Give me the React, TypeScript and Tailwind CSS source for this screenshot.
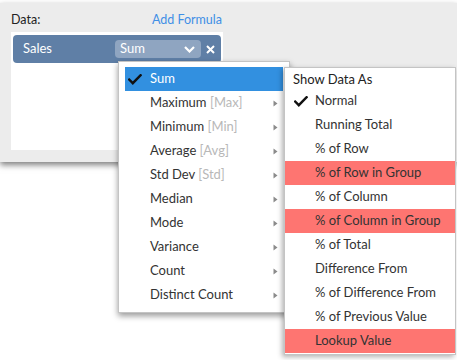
import React from "react";

const Check = ({ className = "" }: { className?: string }) => (
  <svg width="14" height="11" viewBox="0 0 14 11" className={className}>
    <path d="M1.2 5.6 L4.8 9.2 L12.6 1.2" fill="none" stroke="#111" strokeWidth="2.4" strokeLinecap="square" />
  </svg>
);

const Arrow = () => (
  <svg width="5" height="7" viewBox="0 0 5 7" className="shrink-0">
    <path d="M0.5 0.5 L4.5 3.5 L0.5 6.5 Z" fill="#8a8a8a" />
  </svg>
);

const leftItems: [string, string][] = [
  ["Maximum", "[Max]"],
  ["Minimum", "[Min]"],
  ["Average", "[Avg]"],
  ["Std Dev", "[Std]"],
  ["Median", ""],
  ["Mode", ""],
  ["Variance", ""],
  ["Count", ""],
  ["Distinct Count", ""],
];

const rightItems: [string, boolean][] = [
  ["Normal", false],
  ["Running Total", false],
  ["% of Row", false],
  ["% of Row in Group", true],
  ["% of Column", false],
  ["% of Column in Group", true],
  ["% of Total", false],
  ["Difference From", false],
  ["% of Difference From", false],
  ["% of Previous Value", false],
  ["Lookup Value", true],
];

export default function App() {
  return (
    <div
      className="relative w-[457px] h-[360px] bg-white overflow-hidden text-[#333]"
      style={{ fontFamily: "Lato, 'Open Sans', sans-serif" }}
    >
      <div className="pt-[3px]">
        <div className="h-[159px] bg-[#ececec] shadow-[0_3px_6px_rgba(0,0,0,0.5)] pt-[8px]">
          <div className="ml-[11px] w-[212px] flex justify-between items-center h-[18px] text-[12.5px]">
            <span className="text-[#222]">Data:</span>
            <span className="text-[#3f8fe6] mr-[1px]">Add Formula</span>
          </div>
          <div className="ml-[11px] mt-[3px] w-[212px] h-[118px] bg-white pt-[3px] px-[2px]">
            <div className="h-[28px] rounded-[4px] bg-[#5f7fa6] flex items-center pl-[10px] pr-[6px]">
              <span className="text-white text-[13px] flex-1">Sales</span>
              <div className="w-[86px] h-[18px] rounded-[4px] bg-[#8fa5c1] flex items-center pl-[5px] pr-[6px]">
                <span className="text-white text-[13px] flex-1">Sum</span>
                <svg width="11" height="7" viewBox="0 0 11 7">
                  <path d="M1 1 L5.5 5.5 L10 1" fill="none" stroke="white" strokeWidth="2.2" />
                </svg>
              </div>
              <svg width="9" height="9" viewBox="0 0 9 9" className="ml-[5px]">
                <path d="M1 1 L8 8 M8 1 L1 8" stroke="white" strokeWidth="2" />
              </svg>
            </div>
          </div>
        </div>
      </div>

      {/* Left aggregation menu */}
      <div className="absolute left-[118px] top-[61px] w-[172px] h-[252px] bg-white border border-[#c4c4c4] shadow-[0_3px_6px_rgba(0,0,0,0.4)] pt-[5px] px-[6px] text-[13px]">
        <div className="h-[24px] bg-[#3290e0] flex items-center pl-[3px]">
          <Check className="shrink-0" />
          <span className="ml-[8px] text-white">Sum</span>
        </div>
        {leftItems.map(([a, b]) => (
          <div key={a} className="h-[24px] flex items-center pl-[25px] pr-[5px]">
            <span className="flex-1">
              {a}
              {b && <span className="text-[#b8b8b8]"> {b}</span>}
            </span>
            <Arrow />
          </div>
        ))}
      </div>

      {/* Right show data as menu */}
      <div className="absolute left-[284px] top-[67px] w-[172px] h-[288px] bg-white border border-[#c4c4c4] shadow-[-2px_2px_5px_rgba(0,0,0,0.3)] pt-[3px] text-[13px]">
        <div className="h-[18px] flex items-center pl-[8px] text-[#222]">Show Data As</div>
        {rightItems.map(([t, hl], i) => (
          <div
            key={t}
            className={`h-[24px] flex items-center pl-[30px] ${hl ? "bg-[#fe7571]" : ""}`}
          >
            {i === 0 && <Check className="-ml-[21px] mr-[7px]" />}
            <span>{t}</span>
          </div>
        ))}
      </div>
    </div>
  );
}
